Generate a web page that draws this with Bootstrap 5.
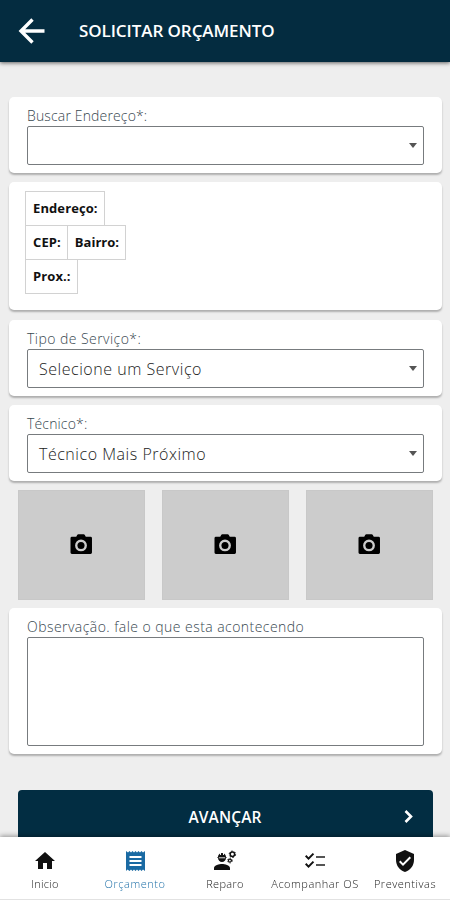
<!DOCTYPE html>
<html lang="pt-BR">
<head>
<meta charset="utf-8">
<meta name="viewport" content="width=device-width, initial-scale=1">
<title>Solicitar Orçamento</title>
<link href="https://cdn.jsdelivr.net/npm/bootstrap@5.3.0/dist/css/bootstrap.min.css" rel="stylesheet">
<style>
  body { font-family: "Open Sans", "Noto Sans", sans-serif; background: #eee; height: 900px; color: #333; }
  .topbar { height: 62px; background: #042c40; box-shadow: 0 1px 4px rgba(0,0,0,.6); padding: 0 17px; }
  .topbar h1 { font-size: 17px; font-weight: 600; letter-spacing: -.07px; margin-left: 34px; padding-top: 1px; }
  .page { padding: 35px 8px 0 9px; }
  .panel { border-radius: 5px; box-shadow: 0 2px 2px rgba(0,0,0,.27); padding: 8px 18px 0; margin-bottom: 9px; height: 76px; }
  .panel-address { height: 128px; padding: 9px 16px 0; }
  .panel-service { margin-top: 10px; }
  .panel-notes { height: 146px; margin-bottom: 36px; }
  .field-label { font-size: 14px; font-weight: 300; line-height: 20px; padding-top: 1px; height: 20.500px; color: #37474f; letter-spacing: .15px; }
  .field-label.wide { letter-spacing: .45px; }
  .field-box { height: 39px; border: 1px solid #777b7e; border-radius: 2px; font-size: 16px; font-weight: 300; color: #222; padding: 1px 6px 0 11px; background: #fff; letter-spacing: .53px; }
  textarea.field-box { height: 109px; resize: none; display: block; }
  .caret { width: 0; height: 0; border: 4.5px solid transparent; border-top: 5px solid #555; border-bottom: 0; }
  .tag { height: 35px; border: 1px solid #d2d2d2; padding: 1px 6px 0 7px; font-size: 13px; font-weight: 700; color: #111; margin-bottom: -1px; }
  .tag.first { letter-spacing: .1px; }
  .photos { gap: 17px; padding: 0 9px; margin-bottom: 8px; }
  .photo { height: 110px; background: #ccc; border: 1px solid #c8c8c8; padding: 0 1px 2px 0; }
  .btn-next { margin: 0 9px; height: 54px; background: #022d42; border-radius: 4px; font-size: 15.5px; font-weight: 600; letter-spacing: .1px; color: #fff; padding: 0 18px 0 17px; }
  .btn-next span { padding: 1px 0 0 13px; }
  .tabs { height: 63px; background: #fff; border-bottom: 1px solid #e2e2e2; box-shadow: 0 -1px 5px rgba(0,0,0,.4); }
  .tab { width: 90px; padding-top: 12px; font-size: 11px; font-weight: 300; color: #222; line-height: 16px; white-space: nowrap; letter-spacing: .3px; }
  .tab svg { display: block; margin-bottom: 3px; }
  .tab.current { color: #1f70a8; }
  .tab.wide { letter-spacing: .52px; }
</style>
<script src="https://cdn.jsdelivr.net/npm/bootstrap@5.3.0/dist/js/bootstrap.bundle.min.js"></script>
</head>
<body class="overflow-hidden">
<svg class="d-none">
  <symbol id="camera" viewBox="0 0 24 22"><path d="M3 3h4l1-2q.4-.7 1.200-.7h5.600q.8 0 1.200.7l1 2h5q1.500 0 1.500 1.500v15q0 1.500-1.500 1.500H2.500Q1 21 1 19.500v-15Q1 3 2.500 3zm9 2.800a6.200 6.200 0 1 0 0 12.400 6.200 6.200 0 0 0 0-12.400z"/><circle cx="12" cy="12" r="3.700"/></symbol>
</svg>
<header class="topbar d-flex align-items-center text-white position-relative">
  <svg width="28" height="28" viewBox="0 0 28 28" fill="none" stroke="#fff" stroke-width="3.400"><path d="M15.500 2.500 4 14l11.500 11.500M3.500 14H27.500"/></svg>
  <h1 class="mb-0">SOLICITAR ORÇAMENTO</h1>
</header>
<main class="page">
  <section class="panel bg-white">
    <div class="field-label">Buscar Endereço*:</div>
    <div class="field-box d-flex align-items-center justify-content-end"><span class="caret"></span></div>
  </section>
  <section class="panel panel-address bg-white">
    <div class="d-flex"><div class="tag first d-flex align-items-center">Endereço:</div></div>
    <div class="d-flex"><div class="tag first d-flex align-items-center">CEP:</div><div class="tag d-flex align-items-center border-start-0">Bairro:</div></div>
    <div class="d-flex"><div class="tag first d-flex align-items-center">Prox.:</div></div>
  </section>
  <section class="panel panel-service bg-white">
    <div class="field-label wide">Tipo de Serviço*:</div>
    <div class="field-box d-flex align-items-center justify-content-between"><span>Selecione um Serviço</span><span class="caret"></span></div>
  </section>
  <section class="panel bg-white">
    <div class="field-label">Técnico*:</div>
    <div class="field-box d-flex align-items-center justify-content-between"><span>Técnico Mais Próximo</span><span class="caret"></span></div>
  </section>
  <div class="photos d-flex">
    <div class="photo flex-fill d-flex align-items-center justify-content-center"><svg width="24" height="21"><use href="#camera"/></svg></div>
    <div class="photo flex-fill d-flex align-items-center justify-content-center"><svg width="24" height="21"><use href="#camera"/></svg></div>
    <div class="photo flex-fill d-flex align-items-center justify-content-center"><svg width="24" height="21"><use href="#camera"/></svg></div>
  </div>
  <section class="panel panel-notes bg-white">
    <div class="field-label wide">Observação. fale o que esta acontecendo</div>
    <textarea class="field-box w-100"></textarea>
  </section>
  <div class="btn-next d-flex align-items-center">
    <span class="flex-fill text-center">AVANÇAR</span>
    <svg width="13" height="16" viewBox="0 0 13 16" fill="none" stroke="#fff" stroke-width="2.600"><path d="m3.500 2 5.500 5.500L3.500 13"/></svg>
  </div>
</main>
<nav class="tabs fixed-bottom d-flex">
  <div class="tab d-flex flex-column align-items-center"><svg width="24" height="24" viewBox="0 0 24 24" fill="#111"><path d="M10 20v-6h4v6h5v-8h3L12 3 2 12h3v8z"/></svg>Inicio</div>
  <div class="tab current wide d-flex flex-column align-items-center"><svg width="25" height="24" viewBox="0 0 24 24" fill="#1a6aa3"><path d="M18 17H6v-2h12v2zm0-4H6v-2h12v2zm0-4H6V7h12v2zM2.500 22l1.500-1.500L6 22l1.500-1.500L9 22l1.500-1.500L12 22l1.500-1.500L15 22l1.500-1.500L18 22l1.500-1.500 2 1.500V2l-2 1.500L18 2l-1.500 1.500L15 2l-1.500 1.500L12 2l-1.500 1.500L9 2 7.500 3.500 6 2 4.500 3.500 2.500 2v20z"/></svg>Orçamento</div>
  <div class="tab d-flex flex-column align-items-center"><svg width="26" height="24" viewBox="0 0 24 24" fill="#111"><path d="M9 15c-2.670 0-8 1.340-8 4v2h16v-2c0-2.660-5.330-4-8-4zM4.740 9H5c0 2.210 1.790 4 4 4s4-1.790 4-4h.26a.49.49 0 0 0 .49-.49v-.02a.49.49 0 0 0-.49-.49H13c0-1.480-.81-2.750-2-3.450v.95a.5.500 0 0 1-1 0V4.140C9.680 4.060 9.350 4 9 4s-.68.060-1 .14V5.500a.5.500 0 0 1-1 0v-.95C5.810 5.250 5 6.520 5 8h-.26a.49.49 0 0 0-.49.49v.03c0 .26.22.48.49.48z"/><path d="M5.800 8.800h6.400" stroke="#ddd" stroke-width="1"/><g fill="none" stroke="#111"><circle cx="19.400" cy="5.300" r="2.200" stroke-width="1.500"/><circle cx="19.400" cy="5.300" r="3.200" stroke-width="1" stroke-dasharray="1.600 1.750"/><circle cx="16.900" cy="11.600" r="1.500" stroke-width="1.300"/><circle cx="16.900" cy="11.600" r="2.400" stroke-width=".8" stroke-dasharray="1.200 1.300"/></g></svg>Reparo</div>
  <div class="tab wide d-flex flex-column align-items-center"><svg width="26" height="24" viewBox="0 0 24 24" fill="#111"><path d="M5.540 11 2 7.460l1.410-1.410 2.120 2.120 4.240-4.240 1.410 1.410L5.540 11zm0 8L2 15.460l1.410-1.410 2.120 2.120 4.240-4.240 1.410 1.410L5.540 19z"/><path fill="#555" d="M22 7h-9v2h9V7zm0 8h-9v2h9v-2z"/></svg>Acompanhar OS</div>
  <div class="tab wide d-flex flex-column align-items-center"><svg width="26" height="24" viewBox="0 0 24 24" fill="#111"><path d="M12 1 3 5v6c0 5.550 3.840 10.740 9 12 5.160-1.260 9-6.450 9-12V5l-9-4zm-2 16-4-4 1.410-1.410L10 14.170l6.590-6.590L18 9l-8 8z"/></svg>Preventivas</div>
</nav>
</body>
</html>
